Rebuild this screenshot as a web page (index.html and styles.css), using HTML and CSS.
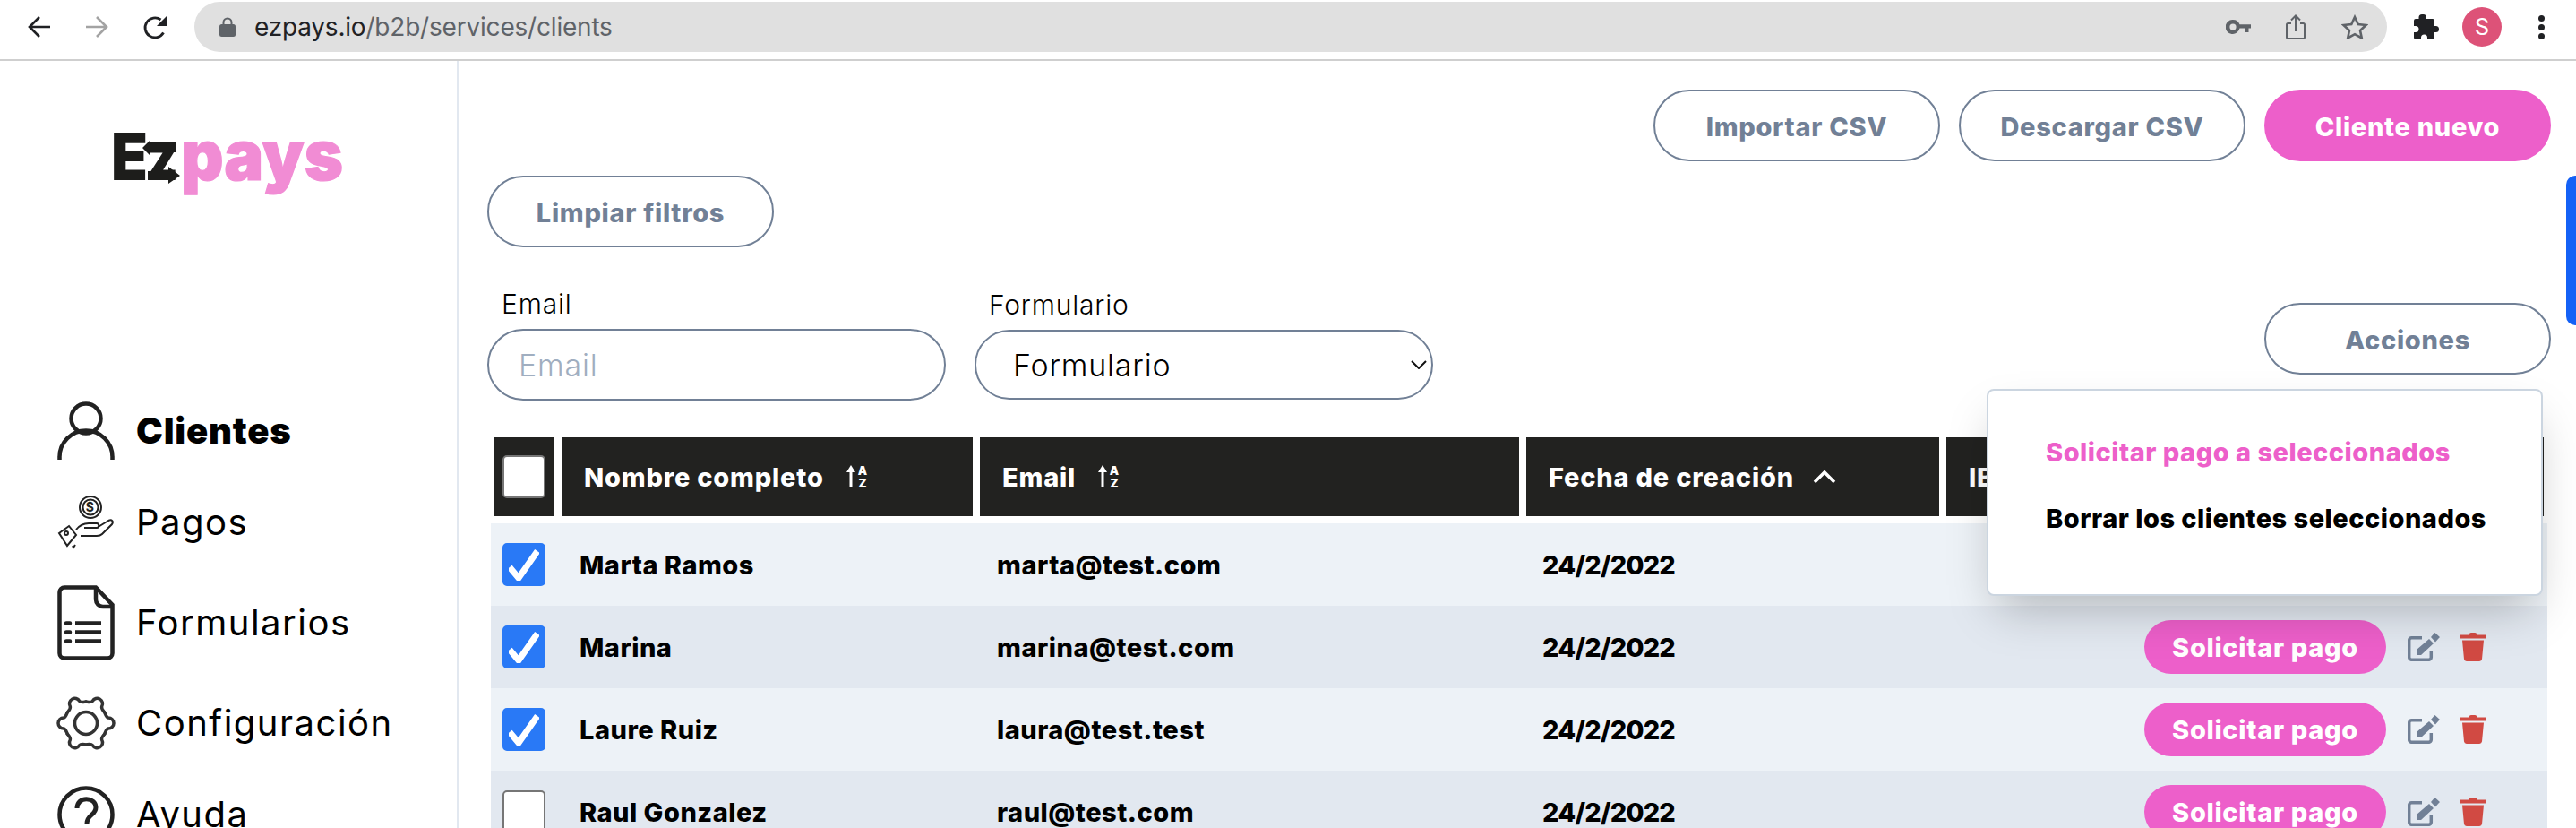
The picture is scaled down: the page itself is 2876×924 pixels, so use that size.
FILE: index.html
```html
<!DOCTYPE html>
<html lang="es">
<head>
<meta charset="utf-8">
<title>Ezpays</title>
<link rel="stylesheet" href="styles.css">
</head>
<body>
<header class="chrome">
  <svg class="ic-nav" width="26" height="26" viewBox="0 0 26 26"><path d="M25 13H3M13 2 2 13l11 11" fill="none" stroke="#202124" stroke-width="2.6"/></svg>
  <svg class="ic-nav" width="26" height="26" viewBox="0 0 26 26"><path d="M1 13h22M13 2l11 11-11 11" fill="none" stroke="#a3a3a3" stroke-width="2.6"/></svg>
  <svg class="ic-nav" width="28" height="28" viewBox="0 0 28 28"><path d="M23.5 19.5A11 11 0 1 1 20.5 5" fill="none" stroke="#202124" stroke-width="2.8"/><path d="M27 1v11H16z" fill="#202124"/></svg>
  <div class="omnibox">
    <svg class="lock" width="18" height="22" viewBox="0 0 18 22"><path d="M4.5 9V6a4.5 4.5 0 0 1 9 0v3" fill="none" stroke="#5f6368" stroke-width="2"/><rect y="8" width="18" height="14" rx="2.5" fill="#5f6368"/></svg>
    <span class="url"><span class="url-host">ezpays.io</span>/b2b/services/clients</span>
    <svg class="key" width="28" height="16" viewBox="0 0 28 16"><path fill-rule="evenodd" d="M8 0a8 8 0 0 1 7.5 5.2H28v4.4h-2.5V14h-4.4V9.6h-5.6A8 8 0 1 1 8 0Zm0 4.4a3.6 3.6 0 1 0 0 7.2 3.6 3.6 0 0 0 0-7.2Z" fill="#5f6368"/></svg>
    <svg class="share" width="22" height="28" viewBox="0 0 22 28"><path d="M6 10H2.5a1.5 1.5 0 0 0-1.5 1.500V25.500A1.500 1.500 0 0 0 2.500 27h17a1.500 1.500 0 0 0 1.500-1.500V11.500a1.500 1.500 0 0 0-1.500-1.500H16M11 19V2M6 6.500 11 1.500l5 5" fill="none" stroke="#5f6368" stroke-width="2"/></svg>
    <svg class="star" width="30" height="28" viewBox="0 0 30 28"><path d="m15 3 3.700 8 8.800 1-6.500 6 1.800 8.500L15 22.200 7.200 26.500 9 18l-6.500-6 8.800-1z" fill="none" stroke="#5f6368" stroke-width="2.600"/></svg>
  </div>
  <svg class="puzzle" width="30" height="30" viewBox="0 0 30 30"><path d="M11 1h1.500A3.500 3.500 0 0 1 16 4.500V6h7a2 2 0 0 1 2 2v6h1.500a3.500 3.500 0 0 1 0 7H25v6a2 2 0 0 1-2 2h-6v-2a3.500 3.500 0 0 0-7 0v2H4a2 2 0 0 1-2-2v-6h2a3.500 3.500 0 0 0 0-7H2V8a2 2 0 0 1 2-2h3.500V4.500A3.500 3.500 0 0 1 11 1Z" fill="#202124"/></svg>
  <div class="avatar">S</div>
  <div class="kebab"><i></i><i></i><i></i></div>
</header>

<div class="layout">
  <aside class="sidebar">
    <svg class="logo" width="256" height="70" viewBox="0 0 256 70">
      <text class="logo-dark" x="-4" y="53" font-size="73" textLength="41" lengthAdjust="spacingAndGlyphs">E</text>
      <text class="logo-dark" x="36" y="53" font-size="77" textLength="35" lengthAdjust="spacingAndGlyphs">z</text>
      <path class="logo-arrow" d="M31 17 40 8v3h29v11H40v4zM73 48 60 57v-4H37V43h23v-5z"/>
      <text class="logo-pink" x="74" y="53" font-size="77" textLength="181" lengthAdjust="spacingAndGlyphs">pays</text>
    </svg>
    <nav class="nav">
      <a class="nav-item nav-active">
        <svg class="nav-icon" width="64" height="64" viewBox="0 0 64 64"><circle cx="32" cy="18" r="16.500" fill="none" stroke="#222" stroke-width="4.500"/><path d="M2.500 64V61A29.500 29.500 0 0 1 61.500 61V64" fill="none" stroke="#222" stroke-width="4.500"/></svg>
        <span class="nav-text">Clientes</span>
      </a>
      <a class="nav-item">
        <svg class="nav-icon" width="64" height="60" viewBox="0 0 64 60" fill="none" stroke="#222" stroke-width="2"><circle cx="37" cy="13" r="12"/><circle cx="37" cy="13" r="8.500"/><text class="dollar" x="37" y="18" font-size="14" text-anchor="middle">$</text><path d="M21 38c4-5 9-7 14-7h9c3 0 3 5 0 5H32M44 36l13-8c4-2 6 1 4 4L50 43c-2 2-4 2-6 2H26M30 36h2"/><path d="M2 42l11-8 8 10-10 12z"/><circle cx="10" cy="42" r="2"/><path d="m17 56 1 2 2-3"/></svg>
        <span class="nav-text">Pagos</span>
      </a>
      <a class="nav-item">
        <svg class="nav-icon" width="64" height="84" viewBox="0 0 64 84" fill="none" stroke="#222" stroke-width="4.500"><path d="M43 2.500H8A5.500 5.500 0 0 0 2.500 8v68A5.500 5.500 0 0 0 8 81.500h48a5.500 5.500 0 0 0 5.500-5.500V22Z"/><path d="M43 2.500V16a8 8 0 0 0 8 8h10.500"/><path d="M20 42.500h29M20 52.500h29M20 62.500h29"/><path d="M10 42.500h4M10 52.500h4M10 62.500h4" stroke-linecap="round"/></svg>
        <span class="nav-text">Formularios</span>
      </a>
      <a class="nav-item">
        <svg class="nav-icon" width="64" height="60" viewBox="0 0 64 60" fill="none" stroke="#333" stroke-width="3.500" stroke-linecap="round">
          <circle cx="32" cy="30" r="12.500"/>
          <g transform="translate(32 30)">
            <path d="M20.800-12C22-9 22.500-6.500 25-6A6 6 0 0 1 25 6C22.500 6.500 22 9 20.800 12"/>
            <path transform="rotate(60)" d="M20.800-12C22-9 22.500-6.500 25-6A6 6 0 0 1 25 6C22.500 6.500 22 9 20.800 12"/>
            <path transform="rotate(120)" d="M20.800-12C22-9 22.500-6.500 25-6A6 6 0 0 1 25 6C22.500 6.500 22 9 20.800 12"/>
            <path transform="rotate(180)" d="M20.800-12C22-9 22.500-6.500 25-6A6 6 0 0 1 25 6C22.500 6.500 22 9 20.800 12"/>
            <path transform="rotate(240)" d="M20.800-12C22-9 22.500-6.500 25-6A6 6 0 0 1 25 6C22.500 6.500 22 9 20.800 12"/>
            <path transform="rotate(300)" d="M20.800-12C22-9 22.500-6.500 25-6A6 6 0 0 1 25 6C22.500 6.500 22 9 20.800 12"/>
          </g>
        </svg>
        <span class="nav-text">Configuración</span>
      </a>
      <a class="nav-item">
        <svg class="nav-icon" width="64" height="64" viewBox="0 0 64 64" fill="none" stroke="#222" stroke-width="4.500"><circle cx="32" cy="32" r="29.500"/><path d="M22 25c0-14 21-13 21-1 0 9-10 8-10 18" stroke-width="5"/><circle cx="33" cy="51" r="3.500" fill="#222" stroke="none"/></svg>
        <span class="nav-text">Ayuda</span>
      </a>
    </nav>
  </aside>

  <main class="main">
    <div class="top-actions">
      <button class="btn">Importar CSV</button>
      <button class="btn">Descargar CSV</button>
      <button class="btn btn-pink">Cliente nuevo</button>
    </div>
    <button class="btn btn-clear">Limpiar filtros</button>
    <div class="filters">
      <label class="field">
        <span class="field-label">Email</span>
        <input class="control" type="text" placeholder="Email">
      </label>
      <label class="field field-form">
        <span class="field-label">Formulario</span>
        <select class="control select"><option>Formulario</option></select>
        <svg class="select-arrow" width="18" height="10" viewBox="0 0 18 10"><path d="M1 1l8 8 8-8" fill="none" stroke="#111" stroke-width="2"/></svg>
      </label>
      <button class="btn btn-actions">Acciones</button>
    </div>

    <div class="thead">
      <div class="th th-check"><span class="box"></span></div>
      <div class="th">Nombre completo
        <svg class="sort" width="26" height="26" viewBox="0 0 26 26"><path d="M6 25V4" fill="none" stroke="#fff" stroke-width="3"/><path d="M6 0l5 8H1z" fill="#fff"/><text x="19" y="11" font-size="13" text-anchor="middle">A</text><text x="19" y="25" font-size="13" text-anchor="middle">Z</text></svg>
      </div>
      <div class="th">Email
        <svg class="sort" width="26" height="26" viewBox="0 0 26 26"><path d="M6 25V4" fill="none" stroke="#fff" stroke-width="3"/><path d="M6 0l5 8H1z" fill="#fff"/><text x="19" y="11" font-size="13" text-anchor="middle">A</text><text x="19" y="25" font-size="13" text-anchor="middle">Z</text></svg>
      </div>
      <div class="th">Fecha de creación
        <svg class="chev" width="26" height="16" viewBox="0 0 26 16"><path d="M2 14 13 3l11 11" fill="none" stroke="#fff" stroke-width="3.500"/></svg>
      </div>
      <div class="th">IBAN</div>
    </div>

    <div class="row">
      <span class="box box-on"><svg width="34" height="36" viewBox="0 0 34 36"><path d="M1 21l10 12L32 3" fill="none" stroke="#fff" stroke-width="7"/></svg></span>
      <span class="cell cell-name">Marta Ramos</span><span class="cell cell-mail">marta@test.com</span><span class="cell cell-date">24/2/2022</span>
      <span class="row-tools"><button class="btn-pay">Solicitar pago</button><svg class="ic-edit" width="36" height="32" viewBox="0 0 36 32"><path d="M16 5.700H4.500a2.800 2.800 0 0 0-2.800 2.800v19a2.800 2.800 0 0 0 2.800 2.800h19a2.800 2.800 0 0 0 2.800-2.800V20" fill="none" stroke="#718096" stroke-width="3.500"/><path d="M10 25v-6L24 7l5 5-14 13zM26 5l3-3.500 1.500-1.500 5.500 5-1.500 1.500-3.500 4z" fill="#718096"/></svg><svg class="ic-trash" width="28" height="32" viewBox="0 0 28 32"><path d="M0 2.500h9C9.500 1 10.500 0 12 0h4c1.500 0 2.500 1 3 2.500h9v4H0zM2 8.500h24l-2 21a3 3 0 0 1-3 2.500H7a3 3 0 0 1-3-2.500z" fill="#d14a43"/></svg></span>
    </div>
    <div class="row row-alt">
      <span class="box box-on"><svg width="34" height="36" viewBox="0 0 34 36"><path d="M1 21l10 12L32 3" fill="none" stroke="#fff" stroke-width="7"/></svg></span>
      <span class="cell cell-name">Marina</span><span class="cell cell-mail">marina@test.com</span><span class="cell cell-date">24/2/2022</span>
      <span class="row-tools"><button class="btn-pay">Solicitar pago</button><svg class="ic-edit" width="36" height="32" viewBox="0 0 36 32"><path d="M16 5.700H4.500a2.800 2.800 0 0 0-2.800 2.800v19a2.800 2.800 0 0 0 2.800 2.800h19a2.800 2.800 0 0 0 2.800-2.800V20" fill="none" stroke="#718096" stroke-width="3.500"/><path d="M10 25v-6L24 7l5 5-14 13zM26 5l3-3.500 1.500-1.500 5.500 5-1.500 1.500-3.500 4z" fill="#718096"/></svg><svg class="ic-trash" width="28" height="32" viewBox="0 0 28 32"><path d="M0 2.500h9C9.500 1 10.500 0 12 0h4c1.500 0 2.500 1 3 2.500h9v4H0zM2 8.500h24l-2 21a3 3 0 0 1-3 2.500H7a3 3 0 0 1-3-2.500z" fill="#d14a43"/></svg></span>
    </div>
    <div class="row">
      <span class="box box-on"><svg width="34" height="36" viewBox="0 0 34 36"><path d="M1 21l10 12L32 3" fill="none" stroke="#fff" stroke-width="7"/></svg></span>
      <span class="cell cell-name">Laure Ruiz</span><span class="cell cell-mail">laura@test.test</span><span class="cell cell-date">24/2/2022</span>
      <span class="row-tools"><button class="btn-pay">Solicitar pago</button><svg class="ic-edit" width="36" height="32" viewBox="0 0 36 32"><path d="M16 5.700H4.500a2.800 2.800 0 0 0-2.800 2.800v19a2.800 2.800 0 0 0 2.800 2.800h19a2.800 2.800 0 0 0 2.800-2.800V20" fill="none" stroke="#718096" stroke-width="3.500"/><path d="M10 25v-6L24 7l5 5-14 13zM26 5l3-3.500 1.500-1.500 5.500 5-1.500 1.500-3.500 4z" fill="#718096"/></svg><svg class="ic-trash" width="28" height="32" viewBox="0 0 28 32"><path d="M0 2.500h9C9.500 1 10.500 0 12 0h4c1.500 0 2.500 1 3 2.500h9v4H0zM2 8.500h24l-2 21a3 3 0 0 1-3 2.500H7a3 3 0 0 1-3-2.500z" fill="#d14a43"/></svg></span>
    </div>
    <div class="row row-alt">
      <span class="box"></span>
      <span class="cell cell-name">Raul Gonzalez</span><span class="cell cell-mail">raul@test.com</span><span class="cell cell-date">24/2/2022</span>
      <span class="row-tools"><button class="btn-pay">Solicitar pago</button><svg class="ic-edit" width="36" height="32" viewBox="0 0 36 32"><path d="M16 5.700H4.500a2.800 2.800 0 0 0-2.800 2.800v19a2.800 2.800 0 0 0 2.800 2.800h19a2.800 2.800 0 0 0 2.800-2.800V20" fill="none" stroke="#718096" stroke-width="3.500"/><path d="M10 25v-6L24 7l5 5-14 13zM26 5l3-3.500 1.500-1.500 5.500 5-1.500 1.500-3.500 4z" fill="#718096"/></svg><svg class="ic-trash" width="28" height="32" viewBox="0 0 28 32"><path d="M0 2.500h9C9.500 1 10.500 0 12 0h4c1.500 0 2.500 1 3 2.500h9v4H0zM2 8.500h24l-2 21a3 3 0 0 1-3 2.500H7a3 3 0 0 1-3-2.500z" fill="#d14a43"/></svg></span>
    </div>

    <div class="dropdown">
      <a class="dd-item dd-pink">Solicitar pago a seleccionados</a>
      <a class="dd-item">Borrar los clientes seleccionados</a>
    </div>
    <div class="side-tab"></div>
  </main>
</div>
</body>
</html>
```

FILE: styles.css
```css
* { box-sizing: border-box; }
html, body { margin: 0; height: 924px; overflow: hidden; background: #fff; }
body { font-family: Inter, "Liberation Sans", sans-serif; color: #000; }

.chrome { height: 68px; border-bottom: 2px solid #cfcfcf; display: flex; align-items: flex-start; padding: 2px 0 0 31px; }
.ic-nav { margin: 15px 38px 0 0; flex: none; }
.omnibox { width: 2448px; height: 56px; margin-left: -8px; border-radius: 28px; background: #e0e0e0; display: flex; align-items: center; padding-left: 28px; }
.lock { flex: none; }
.url { font-size: 28px; color: #5f6368; margin-left: 21px; font-family: Inter, sans-serif; letter-spacing: -0.2px; }
.url-host { color: #202124; }
.key { margin-left: auto; position: relative; left: -2px; }
.share { margin-left: 39px; position: relative; left: -2px; }
.star { margin: 0 21px 0 38px; }
.puzzle { margin: 13px 0 0 28px; flex: none; }
.avatar { width: 44px; height: 44px; border-radius: 50%; background: #dd5278; color: #fff; font-family: Roboto, sans-serif; font-size: 26px; display: flex; align-items: center; justify-content: center; margin: 6px 0 0 26px; flex: none; }
.kebab { display: flex; flex-direction: column; gap: 3px; margin: 15px 0 0 41px; }
.kebab i { width: 7px; height: 7px; border-radius: 50%; background: #202124; }

.layout { display: flex; height: 856px; }
.sidebar { width: 512px; flex: none; border-right: 2px solid #e2e8f0; padding: 80px 0 0 64px; }
.logo { display: block; margin: 0 0 231px 64px; overflow: visible; }
.logo text { font-family: Inter, sans-serif; font-weight: 900; }
.logo-dark { fill: #1d1d1b; }
.logo-arrow { fill: #1d1d1b; }
.logo-pink { fill: #f18cd4; stroke: #f18cd4; stroke-width: 1.2px; }
.nav { display: flex; flex-direction: column; gap: 40px; }
.nav-item { display: flex; align-items: center; gap: 24px; font-size: 40px; font-weight: 400; letter-spacing: 1.5px; color: #000; }
.nav-text { padding-bottom: 2px; }
.nav-active { font-weight: 900; letter-spacing: .8px; }
.nav-icon { flex: none; overflow: visible; }
.dollar { fill: #222; stroke: none; font-weight: 700; }

.main { flex: 1; position: relative; padding: 32px 28px 0 32px; }
.top-actions { display: flex; justify-content: flex-end; gap: 21px; margin-bottom: 16px; }
.btn { width: 320px; height: 80px; border: 2px solid #718096; border-radius: 40px; background: #fff; color: #718096; font: 800 29px Inter, sans-serif; letter-spacing: .7px; padding: 2px 0 0; }
.btn-pink { background: #ed5fca; border-color: #ed5fca; color: #fff; }
.btn-clear { display: block; }
.filters { display: flex; align-items: flex-start; margin-top: 45px; }
.field { display: flex; flex-direction: column; width: 512px; position: relative; }
.field-form { margin: 1px 0 0 32px; }
.field-label { font-size: 30px; line-height: 36px; padding-left: 16px; margin-bottom: 10px; font-weight: 300; letter-spacing: .8px; }
.control { width: 512px; height: 80px; border: 2px solid #718096; border-radius: 40px; background: #fff; font: 300 34px Inter, sans-serif; letter-spacing: .8px; padding: 0 33px; color: #000; }
.control::placeholder { color: #a0aec0; opacity: 1; }
.select { height: 78px; padding: 0 40px 0 41px; appearance: none; -webkit-appearance: none; }
.select-arrow { position: absolute; right: 7px; bottom: 34px; pointer-events: none; }
.btn-actions { margin: 17px 0 0 auto; }

.thead { display: grid; grid-template-columns: 67px 459px 602px 461px 1fr; gap: 8px; height: 88px; margin: 41px 8px 8px 8px; }
.th { background: #222220; color: #fff; font-size: 29px; font-weight: 800; letter-spacing: .8px; display: flex; align-items: center; padding-left: 25px; white-space: nowrap; }
.th-check { padding: 0 0 0 9px; }
.sort { margin-left: 24px; font-weight: 900; letter-spacing: 0; }
.sort text { fill: #fff; }
.chev { margin-left: 21px; }

.row { display: flex; align-items: center; height: 92px; margin: 0 4px; background: #edf2f7; padding-left: 13px; font-size: 29px; font-weight: 800; letter-spacing: .5px; }
.row-alt { background: #e2e8f0; }
.box { width: 48px; height: 48px; flex: none; border: 2px solid #767676; border-radius: 5px; background: #fff; display: flex; align-items: center; justify-content: center; }
.box-on { background: #2979f6; border-color: #2979f6; }
.cell { flex: none; }
.cell-name { width: 466px; margin-left: 38px; }
.cell-mail { width: 609px; }
.cell-date { width: 240px; letter-spacing: -.8px; }
.row-tools { margin-left: auto; padding-right: 69px; display: flex; align-items: center; }
.btn-pay { width: 270px; height: 60px; border: 0; border-radius: 30px; background: #ed5fca; color: #fff; font: 800 29px Inter, sans-serif; letter-spacing: .7px; padding: 0; }
.ic-edit { margin-left: 24px; }
.ic-trash { margin-left: 23px; }

.dropdown { position: absolute; top: 366px; right: 37px; width: 621px; height: 231px; background: #fff; border: 2px solid #cbd5e0; border-radius: 8px; box-shadow: 0 25px 50px -12px rgba(0,0,0,.25); padding: 51px 0 0 64px; display: flex; flex-direction: column; gap: 38px; font-size: 29px; font-weight: 800; letter-spacing: .5px; }
.dd-item { line-height: 36px; }
.dd-pink { color: #ed5fca; }
.side-tab { position: absolute; top: 128px; right: 0; width: 11px; height: 167px; background: #1461f6; border-radius: 10px 0 0 10px; }
```
